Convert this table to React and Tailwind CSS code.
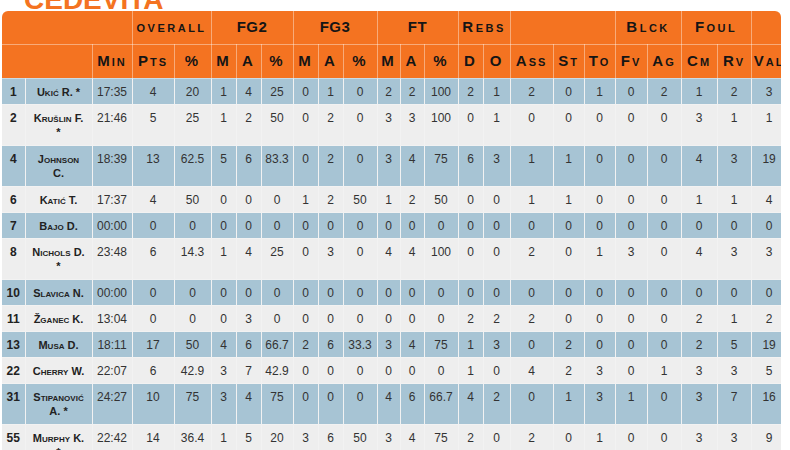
const COLS = [
  "w-[23px]", "w-[67px]", "w-[40px]", "w-[42px]", "w-[37px]",
  "w-[25px]", "w-[25px]", "w-[32px]",
  "w-[25px]", "w-[25px]", "w-[34px]",
  "w-[23px]", "w-[24px]", "w-[34px]",
  "w-[25px]", "w-[27px]",
  "w-[43px]", "w-[31px]", "w-[31px]",
  "w-[32px]", "w-[34px]",
  "w-[36px]", "w-[34px]", "w-[36px]",
];

const players = [
  { no: "1", name: ["Ukić R. *"], min: "17:35", v: [4, 20, 1, 4, 25, 0, 1, 0, 2, 2, 100, 2, 1, 2, 0, 1, 0, 2, 1, 2, 3] },
  { no: "2", name: ["Krušlin F.", "*"], min: "21:46", v: [5, 25, 1, 2, 50, 0, 2, 0, 3, 3, 100, 0, 1, 0, 0, 0, 0, 0, 3, 1, 1] },
  { no: "4", name: ["Johnson", "C."], min: "18:39", v: [13, 62.5, 5, 6, 83.3, 0, 2, 0, 3, 4, 75, 6, 3, 1, 1, 0, 0, 0, 4, 3, 19] },
  { no: "6", name: ["Katić T."], min: "17:37", v: [4, 50, 0, 0, 0, 1, 2, 50, 1, 2, 50, 0, 0, 1, 1, 0, 0, 0, 1, 1, 4] },
  { no: "7", name: ["Bajo D."], min: "00:00", v: [0, 0, 0, 0, 0, 0, 0, 0, 0, 0, 0, 0, 0, 0, 0, 0, 0, 0, 0, 0, 0] },
  { no: "8", name: ["Nichols D.", "*"], min: "23:48", v: [6, 14.3, 1, 4, 25, 0, 3, 0, 4, 4, 100, 0, 0, 2, 0, 1, 3, 0, 4, 3, 3] },
  { no: "10", name: ["Slavica N."], min: "00:00", v: [0, 0, 0, 0, 0, 0, 0, 0, 0, 0, 0, 0, 0, 0, 0, 0, 0, 0, 0, 0, 0] },
  { no: "11", name: ["Žganec K."], min: "13:04", v: [0, 0, 0, 3, 0, 0, 0, 0, 0, 0, 0, 2, 2, 2, 0, 0, 0, 0, 2, 1, 2] },
  { no: "13", name: ["Musa D."], min: "18:11", v: [17, 50, 4, 6, 66.7, 2, 6, 33.3, 3, 4, 75, 1, 3, 0, 2, 0, 0, 0, 2, 5, 19] },
  { no: "22", name: ["Cherry W."], min: "22:07", v: [6, 42.9, 3, 7, 42.9, 0, 0, 0, 0, 0, 0, 1, 0, 4, 2, 3, 0, 1, 3, 3, 5] },
  { no: "31", name: ["Stipanović", "A. *"], min: "24:27", v: [10, 75, 3, 4, 75, 0, 0, 0, 4, 6, 66.7, 4, 2, 0, 1, 3, 1, 0, 3, 7, 16] },
  { no: "55", name: ["Murphy K.", "*"], min: "22:42", v: [14, 36.4, 1, 5, 20, 3, 6, 50, 3, 4, 75, 2, 0, 2, 0, 1, 0, 0, 3, 3, 9] },
];

// fake small-caps: capitals stay full size, lowercase letters become smaller capitals
function Caps({ text, small }) {
  return (
    <>
      {[...text].map((ch, i) =>
        ch !== ch.toUpperCase() ? (
          <span key={i} className={small}>{ch.toUpperCase()}</span>
        ) : (
          <span key={i}>{ch}</span>
        )
      )}
    </>
  );
}

function Group({ label, span, wide }) {
  return (
    <th
      colSpan={span}
      className={
        "border-r border-b border-white/40 text-center align-middle font-bold text-[15px] text-[#151515] " +
        (wide ? "tracking-[2.5px]" : "tracking-[0.5px]")
      }
    >
      {label ? <Caps text={label} small="text-[11px]" /> : null}
    </th>
  );
}

function Head({ label }) {
  return (
    <th className="border-r border-b border-white/40 text-center align-middle font-bold text-[15px] tracking-[2px] text-[#151515]">
      <Caps text={label} small="text-[11px]" />
    </th>
  );
}

export default function App() {
  return (
    <div className="w-[790px] h-[450px] overflow-hidden bg-white font-['Liberation_Sans',Arial,sans-serif]">
      <div className="h-[11px] flex flex-col">
        <div className="-mt-[14px] ml-[24px] text-[28px] leading-[28px] font-bold text-[#f47321]">
          CEDEVITA
        </div>
      </div>

      <div className="ml-[2px] w-[779px] overflow-hidden rounded-t-[6px]">
        <table className="table-fixed border-collapse w-[785px]">
          <colgroup>
            {COLS.map((c, i) => <col key={i} className={c} />)}
          </colgroup>
          <thead className="bg-[#f47321]">
            <tr className="h-[33px]">
              <Group span={3} />
              <Group label="overall" span={2} wide />
              <Group label="FG2" span={3} />
              <Group label="FG3" span={3} />
              <Group label="FT" span={3} />
              <Group label="Rebs" span={2} wide />
              <Group span={3} />
              <Group label="Blck" span={2} wide />
              <Group label="Foul" span={2} wide />
              <Group span={1} />
            </tr>
            <tr className="h-[34px]">
              <th colSpan={2} className="border-r border-b border-white/40" />
              {["Min", "Pts", "%", "M", "A", "%", "M", "A", "%", "M", "A", "%", "D", "O",
                "Ass", "St", "To", "Fv", "Ag", "Cm", "Rv", "Val"].map((h, i) => (
                <Head key={i} label={h} />
              ))}
            </tr>
          </thead>
          <tbody>
            {players.map((p, i) => (
              <tr
                key={p.no}
                className={(p.name.length > 1 ? "h-[41px] " : "h-[26px] ") + (i % 2 === 0 ? "bg-[#a7c4d4]" : "bg-[#eeeeee]")}
              >
                <td className="border-r border-b border-[#f2f2f2] align-top pt-[6px] text-center text-[12px] leading-[14px] font-bold text-[#222]">
                  {p.no}
                </td>
                <td className="border-r border-b border-[#f2f2f2] align-top pt-[7px] px-[2px] text-center text-[11px] leading-[12px] font-bold text-[#222]">
                  {p.name.map((line, j) => (
                    <div key={j}>
                      <Caps text={line} small="text-[8px]" />
                    </div>
                  ))}
                </td>
                <td className="border-r border-b border-[#f2f2f2] align-top pt-[6px] text-center text-[12px] leading-[14px] text-[#333]">
                  {p.min}
                </td>
                {p.v.map((x, j) => (
                  <td
                    key={j}
                    className="border-r border-b border-[#f2f2f2] align-top pt-[6px] text-center text-[12px] leading-[14px] text-[#333]"
                  >
                    {x}
                  </td>
                ))}
              </tr>
            ))}
          </tbody>
        </table>
      </div>
    </div>
  );
}
